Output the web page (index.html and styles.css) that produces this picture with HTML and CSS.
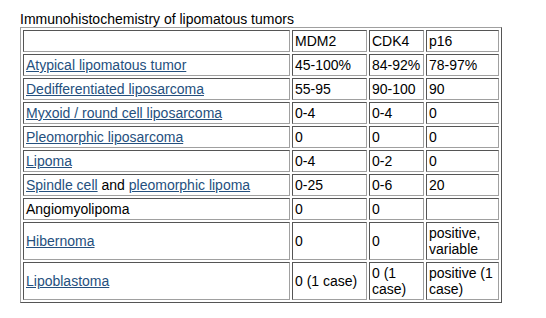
FILE: index.html
```html
<!DOCTYPE html>
<html>
<head>
<meta charset="utf-8">
<link rel="stylesheet" href="styles.css">
</head>
<body>
<div class="title">Immunohistochemistry of lipomatous tumors</div>
<table class="ihc">
  <tr>
    <td class="c1"></td>
    <td class="c2">MDM2</td>
    <td class="c3">CDK4</td>
    <td class="c4">p16</td>
  </tr>
  <tr>
    <td><a href="#">Atypical lipomatous tumor</a></td>
    <td>45-100%</td>
    <td>84-92%</td>
    <td>78-97%</td>
  </tr>
  <tr>
    <td><a href="#">Dedifferentiated liposarcoma</a></td>
    <td>55-95</td>
    <td>90-100</td>
    <td>90</td>
  </tr>
  <tr>
    <td><a href="#">Myxoid / round cell liposarcoma</a></td>
    <td>0-4</td>
    <td>0-4</td>
    <td>0</td>
  </tr>
  <tr>
    <td><a href="#">Pleomorphic liposarcoma</a></td>
    <td>0</td>
    <td>0</td>
    <td>0</td>
  </tr>
  <tr>
    <td><a href="#">Lipoma</a></td>
    <td>0-4</td>
    <td>0-2</td>
    <td>0</td>
  </tr>
  <tr>
    <td><a href="#">Spindle cell</a> and <a href="#">pleomorphic lipoma</a></td>
    <td>0-25</td>
    <td>0-6</td>
    <td>20</td>
  </tr>
  <tr>
    <td>Angiomyolipoma</td>
    <td>0</td>
    <td>0</td>
    <td></td>
  </tr>
  <tr>
    <td><a href="#">Hibernoma</a></td>
    <td>0</td>
    <td>0</td>
    <td>positive, variable</td>
  </tr>
  <tr>
    <td><a href="#">Lipoblastoma</a></td>
    <td>0 (1 case)</td>
    <td>0 (1 case)</td>
    <td>positive (1 case)</td>
  </tr>
</table>
</body>
</html>
```
FILE: styles.css
```css
html, body {
  background: #ffffff;
}
body {
  margin: 0;
  padding: 11px 20px;
  font-family: "Liberation Sans", Arial, sans-serif;
  font-size: 14px;
  line-height: 16px;
  color: #000000;
}
.title {
  line-height: 16px;
}
.ihc {
  border-collapse: separate;
  border-spacing: 2px;
  border-width: 1px;
  border-style: solid;
  border-color: #a0a0a0 #555555 #555555 #a0a0a0;
}
.ihc td {
  padding: 2px;
  border-width: 1px;
  border-style: solid;
  border-color: #555555 #a0a0a0 #a0a0a0 #555555;
  vertical-align: middle;
  text-align: left;
  line-height: 16px;
  height: 16px;
}
.ihc .c1 { width: 261px; }
.ihc .c2 { width: 69px; }
.ihc .c3 { width: 49px; }
.ihc .c4 { width: 67px; }
.ihc a {
  color: #25507e;
  text-decoration: underline;
}
```
